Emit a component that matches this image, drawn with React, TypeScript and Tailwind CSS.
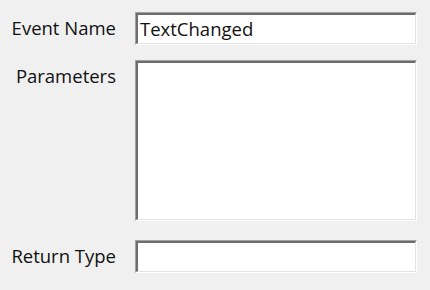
export default function App() {
    return (
        <div className="h-[290px] w-[430px] bg-[#f0f0f0] text-[#111] font-['Segoe_UI','Open_Sans',sans-serif] text-[18.5px] leading-none">
            <div className="grid grid-cols-[116px_1fr] gap-x-[19px] pr-[13px] pt-[12px]">
                <div className="flex h-[33px] items-center justify-end">Event Name</div>
                <div className="h-[33px] border-l border-t border-b border-r border-l-[#a0a0a0] border-t-[#a0a0a0] border-b-white border-r-white">
                    <div className="flex h-full items-center border-l-2 border-t-2 border-b border-r border-l-[#6d6d6d] border-t-[#6d6d6d] border-b-[#e3e3e3] border-r-[#e3e3e3] bg-white pl-[2px]">
                        TextChanged
                    </div>
                </div>

                <div className="mt-[15px] flex h-[33px] items-center justify-end">Parameters</div>
                <div className="mt-[15px] h-[161px] border-l border-t border-b border-r border-l-[#a0a0a0] border-t-[#a0a0a0] border-b-white border-r-white">
                    <div className="h-full border-l-2 border-t-2 border-b border-r border-l-[#6d6d6d] border-t-[#6d6d6d] border-b-[#e3e3e3] border-r-[#e3e3e3] bg-white"></div>
                </div>

                <div className="mt-[19px] flex h-[33px] items-center justify-end">Return Type</div>
                <div className="mt-[19px] h-[33px] border-l border-t border-b border-r border-l-[#a0a0a0] border-t-[#a0a0a0] border-b-white border-r-white">
                    <div className="h-full border-l-2 border-t-2 border-b border-r border-l-[#6d6d6d] border-t-[#6d6d6d] border-b-[#e3e3e3] border-r-[#e3e3e3] bg-white"></div>
                </div>
            </div>
        </div>
    );
}
